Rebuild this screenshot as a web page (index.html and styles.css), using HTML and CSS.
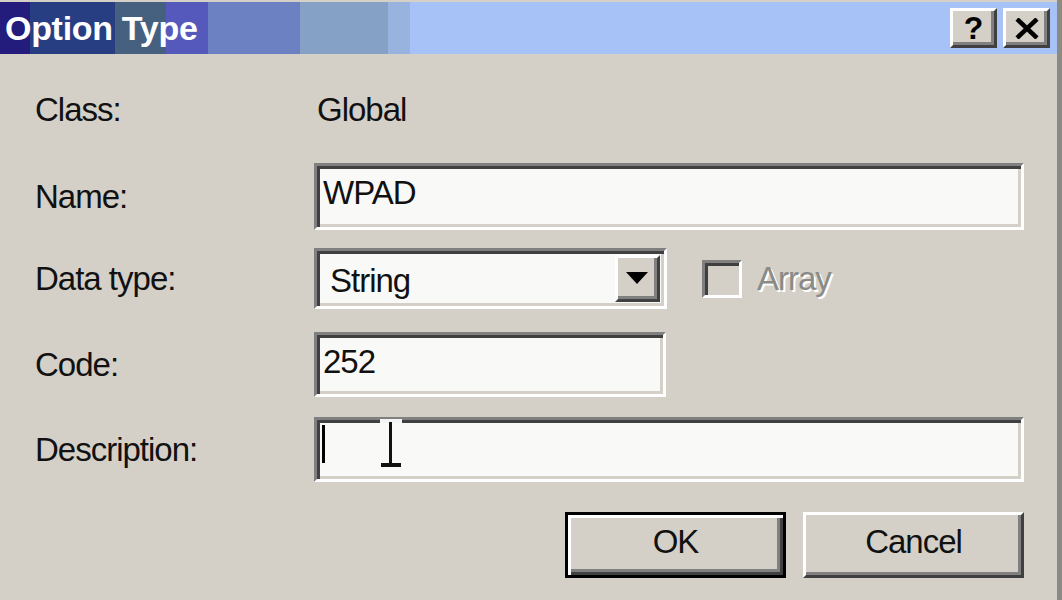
FILE: index.html
```html
<!DOCTYPE html>
<html lang="en">
<head>
  <meta charset="UTF-8" />
  <title>Option Type</title>
  <link rel="stylesheet" href="styles.css">
</head>
<body>
  <div class="dialog">
    <div class="titlebar">
      <span class="title">Option Type</span>
      <div class="caption-buttons">
        <button class="cap-btn help">?</button>
        <button class="cap-btn close">
          <svg width="26" height="21" viewBox="0 0 26 21"><path d="M3 1 L23 20 M23 1 L3 20" stroke="#000" stroke-width="4.5" fill="none"/></svg>
        </button>
      </div>
    </div>
    <div class="content">
      <div class="row row-class">
        <span class="label">Class:</span>
        <span class="value">Global</span>
      </div>
      <div class="row row-name">
        <span class="label">Name:</span>
        <div class="field field-wide">WPAD</div>
      </div>
      <div class="row row-type">
        <span class="label">Data type:</span>
        <div class="combo">
          <span class="combo-text">String</span>
          <span class="combo-btn"><span class="arrow"></span></span>
        </div>
        <div class="check">
          <span class="check-box"></span>
          <span class="check-text">Array</span>
        </div>
      </div>
      <div class="row row-code">
        <span class="label">Code:</span>
        <div class="field field-short">252</div>
      </div>
      <div class="row row-desc">
        <span class="label">Description:</span>
        <div class="field field-wide desc"><span class="caret"></span>
          <svg class="ibeam" width="22" height="50" viewBox="0 0 22 50">
            <rect x="0" y="0" width="22" height="4" fill="#f4f4f4"/>
            <rect x="9" y="3" width="3" height="44" fill="#111"/>
            <rect x="1" y="44" width="20" height="4" fill="#111"/>
          </svg>
        </div>
      </div>
      <div class="actions">
        <button class="btn btn-default">OK</button>
        <button class="btn">Cancel</button>
      </div>
    </div>
  </div>
</body>
</html>
```

FILE: styles.css
```css
body { margin: 0; background: #d4d0c8; font-family: "Liberation Sans", Arial, sans-serif; }
.dialog { width: 1057px; height: 600px; background: #d4d0c8; border-right: 5px solid #8c8a85; padding-top: 2px; box-sizing: content-box; overflow: hidden; }

.titlebar { height: 52px; display: flex; align-items: center; justify-content: space-between; padding: 0 7px 0 5px;
  background: linear-gradient(to right, #241c7c 0, #241c7c 30px, #283e82 30px, #283e82 115px, #46607f 115px, #46607f 166px,
    #5559bc 166px, #5559bc 208px, #6b81c2 208px, #6b81c2 300px, #85a1c6 300px, #85a1c6 388px, #98b4de 388px, #98b4de 410px, #a7c2f7 410px); }
.title { color: #fff; font-weight: bold; font-size: 34px; letter-spacing: -0.3px; line-height: 40px; }
.caption-buttons { display: flex; gap: 6px; }
.cap-btn { width: 47px; height: 40px; padding: 0; background: #d4d0c8; display: flex; align-items: center; justify-content: center;
  border: 3px solid; border-color: #fff #404040 #404040 #fff; box-shadow: inset -3px -3px #808080;
  font-family: "Liberation Sans", Arial, sans-serif; font-weight: bold; font-size: 32px; color: #000; line-height: 1; }

.content { padding: 31px 33px 0 35px; font-size: 33px; letter-spacing: -1px; color: #111; }
.row { display: flex; align-items: center; }
.label { width: 279px; flex-shrink: 0; line-height: 36px; }
.value { line-height: 36px; margin-left: 3px; }
.row-class { height: 50px; }
.row-name { height: 67px; margin-top: 28px; }
.row-type { height: 61px; margin-top: 18px; }
.row-code { height: 65px; margin-top: 23px; }
.row-desc { height: 65px; margin-top: 20px; }

.field { height: 100%; box-sizing: border-box; background: #f9f9f8; line-height: 36px; padding: 9px 6px 0;
  border: 3px solid; border-color: #808080 #fff #fff #808080; box-shadow: inset 3px 3px #404040, inset -3px -3px #d4d0c8; }
.field-wide { width: 710px; }
.field-short { width: 352px; }
.desc { position: relative; display: flex; align-items: flex-start; padding-top: 5px; }
.caret { display: block; width: 3px; height: 38px; background: #000; margin-left: -1px; }
.ibeam { position: absolute; left: 63px; top: -1px; }

.combo { width: 353px; height: 100%; box-sizing: border-box; display: flex; background: #f9f9f8;
  border: 3px solid; border-color: #808080 #fff #fff #808080; box-shadow: inset 3px 3px #404040, inset -3px -3px #d4d0c8; padding: 4px 4px 4px 3px; }
.combo-text { flex: 1; line-height: 36px; padding: 8px 0 0 10px; }
.combo-btn { width: 45px; box-sizing: border-box; background: #d4d0c8; display: flex; align-items: center; justify-content: center;
  border: 3px solid; border-color: #fff #404040 #404040 #fff; box-shadow: inset -3px -3px #808080; }
.arrow { width: 0; height: 0; border-left: 11px solid transparent; border-right: 11px solid transparent; border-top: 12px solid #000; margin: 0 2px 2px 0; }

.check { display: flex; align-items: center; margin-left: 35px; }
.check-box { width: 40px; height: 38px; box-sizing: border-box; border: 3px solid; border-color: #808080 #fff #fff #808080;
  box-shadow: inset 3px 3px #404040, inset -3px -3px #d4d0c8; background: #d4d0c8; }
.check-text { margin-left: 15px; color: #8a8a86; text-shadow: 2px 2px 0 #fff; line-height: 36px; }

.actions { display: flex; justify-content: flex-end; gap: 17px; margin-top: 30px; }
.btn { width: 221px; height: 66px; background: #d4d0c8; font-family: "Liberation Sans", Arial, sans-serif; font-size: 33px; letter-spacing: -1px; color: #111;
  border: 3px solid; border-color: #fff #404040 #404040 #fff; box-shadow: inset -3px -3px #808080; padding: 0 0 6px; }
.btn-default { border: 3px solid #000; box-shadow: inset 3px 3px #fff, inset -3px -3px #404040, inset -6px -6px #808080; }
```
